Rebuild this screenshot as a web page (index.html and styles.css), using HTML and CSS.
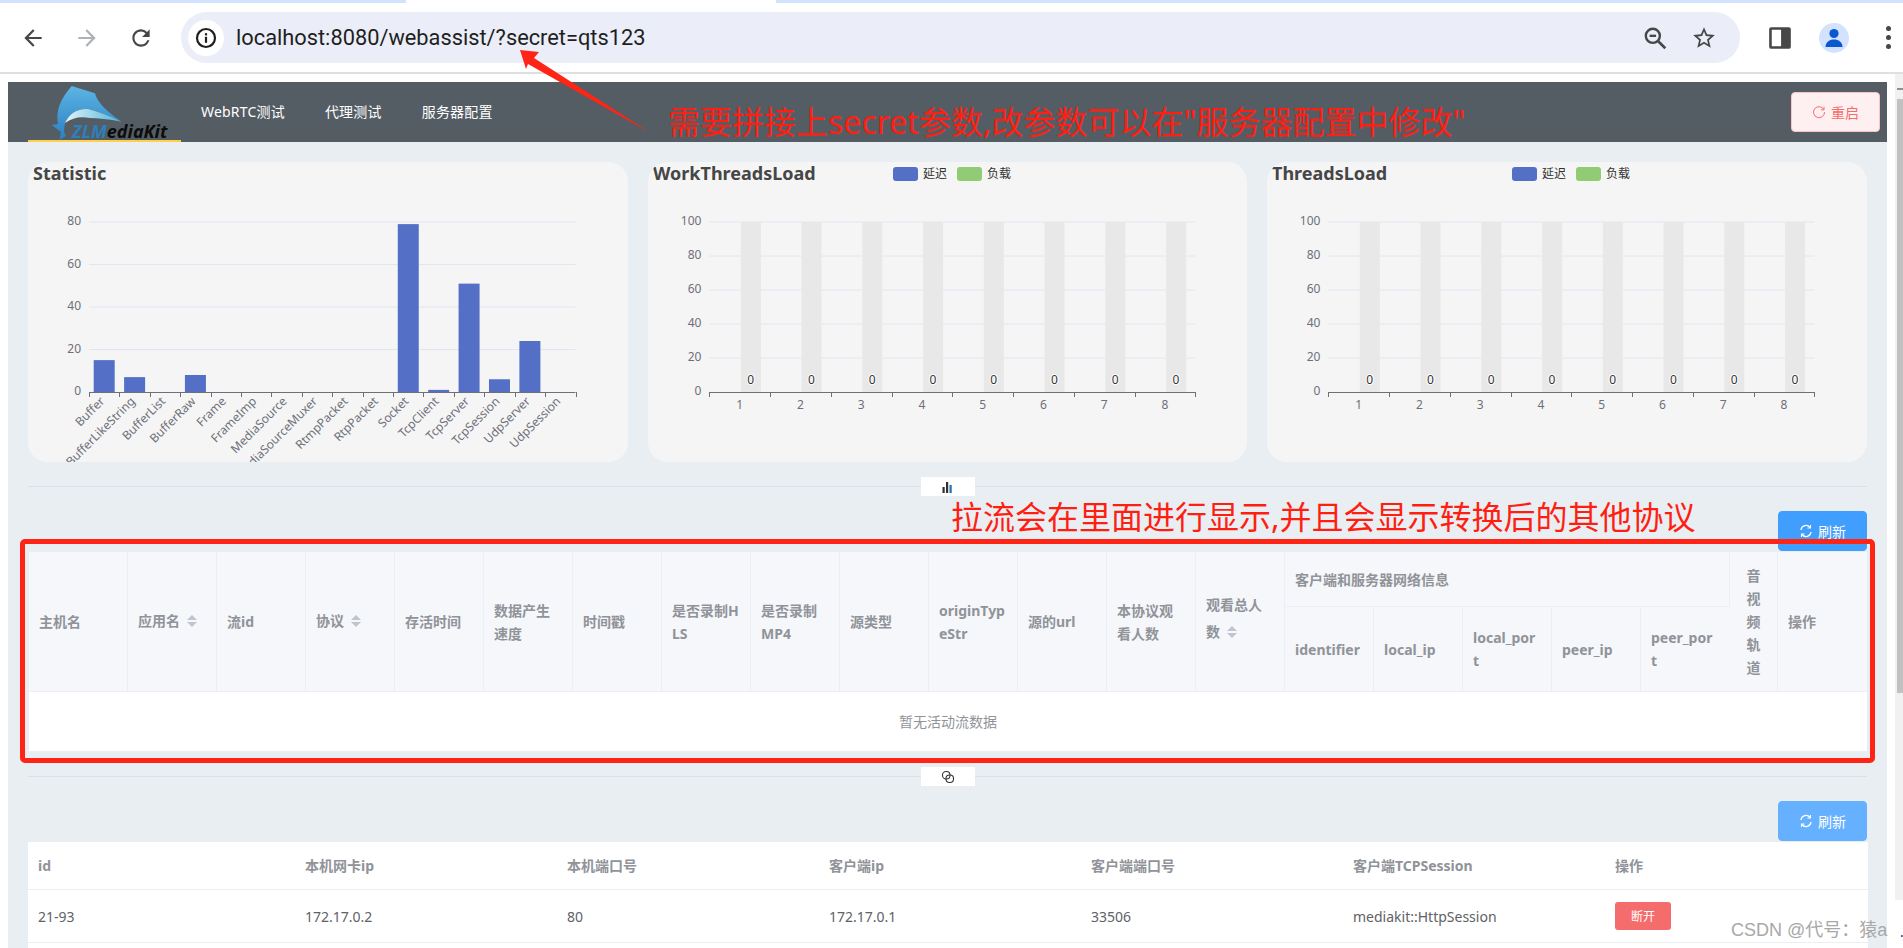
FILE: index.html
```html
<!DOCTYPE html>
<html lang="zh-CN">
<head>
    <meta charset="UTF-8">
    <meta name="viewport" content="width=device-width, initial-scale=1.0">
    <title>ZLMediaKit webassist</title>
    <link rel="stylesheet" href="styles.css">
</head>
<body>
    <div class="tabstrip"><div class="tab-active"></div></div>

    <div class="toolbar">
        <button class="tool-btn">
            <svg class="tool-icon" viewBox="0 0 24 24"><path d="M20 11H7.83l5.59-5.59L12 4l-8 8 8 8 1.41-1.41L7.83 13H20v-2z"/></svg>
        </button>
        <button class="tool-btn tool-off">
            <svg class="tool-icon" viewBox="0 0 24 24"><path d="M4 11h12.17l-5.59-5.59L12 4l8 8-8 8-1.41-1.41L16.17 13H4v-2z"/></svg>
        </button>
        <button class="tool-btn">
            <svg class="tool-icon" viewBox="0 0 24 24"><path d="M17.65 6.35A7.95 7.95 0 0 0 12 4c-4.42 0-7.99 3.58-7.99 8s3.57 8 7.99 8c3.73 0 6.84-2.55 7.73-6h-2.08A5.99 5.99 0 0 1 12 18c-3.31 0-6-2.69-6-6s2.69-6 6-6c1.66 0 3.14.69 4.22 1.78L13 11h7V4l-2.35 2.35z"/></svg>
        </button>
        <div class="omnibox">
            <div class="site-info">
                <svg viewBox="0 0 24 24" class="info-icon"><circle cx="12" cy="12" r="9" fill="none" stroke="#1f1f1f" stroke-width="2.2"/><rect x="10.9" y="10.8" width="2.2" height="6" fill="#1f1f1f"/><rect x="10.9" y="7.2" width="2.2" height="2.2" fill="#1f1f1f"/></svg>
            </div>
            <span class="url">localhost:8080/webassist/?secret=qts123</span>
            <svg class="omni-icon omni-zoom" viewBox="0 0 24 24"><circle cx="10" cy="10" r="6.5" fill="none" stroke="#474747" stroke-width="2.2"/><path d="M7 10h6" stroke="#474747" stroke-width="2.2"/><path d="M15 15l6.5 6.5" stroke="#474747" stroke-width="2.4"/></svg>
            <svg class="omni-icon omni-star" viewBox="0 0 24 24"><path d="M22 9.24l-7.19-.62L12 2 9.19 8.63 2 9.24l5.46 4.73L5.82 21 12 17.27 18.18 21l-1.63-7.03L22 9.24zM12 15.4l-3.76 2.27 1-4.28-3.32-2.88 4.38-.38L12 6.1l1.71 4.04 4.38.38-3.32 2.88 1 4.28L12 15.4z"/></svg>
        </div>
        <button class="tool-btn side-btn">
            <svg class="tool-icon" viewBox="0 0 24 24"><rect x="2" y="2" width="20" height="20" rx="2" fill="#474747"/><rect x="4.4" y="4.4" width="8.6" height="15.2" fill="#fff"/></svg>
        </button>
        <button class="tool-btn">
            <svg class="avatar" viewBox="0 0 30 30"><circle cx="15" cy="15" r="15" fill="#d3e3fd"/><circle cx="15" cy="10.5" r="4.6" fill="#0b57d0"/><path d="M6.5 24c0-5 4-7.5 8.5-7.500s8.500 2.500 8.500 7.500z" fill="#0b57d0"/></svg>
        </button>
        <button class="tool-btn kebab">
            <span class="dot"></span><span class="dot"></span><span class="dot"></span>
        </button>
    </div>

    <div class="viewport">
        <div class="page">
            <div class="topbar">
                <div class="logo">
                    <svg class="logo-fish" viewBox="0 0 153 60">
                        <defs>
                            <linearGradient id="fishBlue" x1="0" y1="0" x2="0" y2="1">
                                <stop offset="0" stop-color="#5db4e4"/>
                                <stop offset="1" stop-color="#2a80c2"/>
                            </linearGradient>
                            <linearGradient id="fishBelly" x1="0" y1="0" x2="1" y2="0">
                                <stop offset="0" stop-color="#e2f4f8"/>
                                <stop offset="1" stop-color="#4fb3d9"/>
                            </linearGradient>
                        </defs>
                        <path d="M43.700 4 L67 11.300 Q70 24 93.700 39.700 Q76 31 60 27 Q44 26 37 41 Q36 46 36 50 L38 54 L31.300 58 L33 50 L23.700 43 L30 42 Q26 24 43.700 4z" fill="url(#fishBlue)"/>
                        <path d="M37 41 Q44 26 60 27 Q76 31 93.700 39.700 Q74 36 62 36 Q48 33 37 41z" fill="url(#fishBelly)"/>
                    </svg>
                    <span class="logo-text"><span class="logo-zlm">ZLM</span>ediaKit</span>
                </div>
                <a class="menu-item">WebRTC测试</a>
                <a class="menu-item">代理测试</a>
                <a class="menu-item">服务器配置</a>
                <button class="btn btn-restart">
                    <svg class="btn-icon" viewBox="0 0 14 14"><path d="M11.800 4.500A5.500 5.500 0 1 0 12.500 7" fill="none" stroke="currentColor" stroke-width="1"/><path d="M12 1.800v3h-3" fill="none" stroke="currentColor" stroke-width="1"/></svg>
                    重启
                </button>
            </div>

            <div class="content">
                <div class="charts">
                    <div class="card" id="chartStatistic"></div>
                    <div class="card" id="chartWork"></div>
                    <div class="card" id="chartThreads"></div>
                </div>

                <div class="divider">
                    <span class="divider-label">
                        <svg viewBox="0 0 14 14" class="divider-icon"><rect x="1.500" y="7" width="2.200" height="6" fill="#303133"/><rect x="5" y="2" width="2.200" height="11" fill="#303133"/><rect x="8.500" y="5" width="2.200" height="8" fill="#1f6fb2"/></svg>
                    </span>
                </div>

                <div class="actions">
                    <button class="btn btn-refresh">
                        <svg class="btn-icon" viewBox="0 0 14 14"><path d="M2 6A5 5 0 0 1 11 3.500M12 8A5 5 0 0 1 3 10.500" fill="none" stroke="currentColor" stroke-width="1.300"/><path d="M11.500 1v3h-3M2.500 13v-3h3" fill="none" stroke="currentColor" stroke-width="1.100"/></svg>
                        刷新
                    </button>
                </div>

                <table class="data-table stream-table">
                    <colgroup>
                        <col class="col-first">
                        <col class="col-std"><col class="col-std"><col class="col-std"><col class="col-std">
                        <col class="col-std"><col class="col-std"><col class="col-std"><col class="col-std">
                        <col class="col-std"><col class="col-std"><col class="col-std"><col class="col-std"><col class="col-std">
                        <col class="col-std"><col class="col-std"><col class="col-std"><col class="col-std"><col class="col-std">
                        <col class="col-track">
                        <col class="col-last">
                    </colgroup>
                    <thead>
                        <tr class="head-top">
                            <th rowspan="2">主机名</th>
                            <th rowspan="2">应用名<span class="caret-wrapper"><i class="sort-caret ascending"></i><i class="sort-caret descending"></i></span></th>
                            <th rowspan="2">流id</th>
                            <th rowspan="2">协议<span class="caret-wrapper"><i class="sort-caret ascending"></i><i class="sort-caret descending"></i></span></th>
                            <th rowspan="2">存活时间</th>
                            <th rowspan="2">数据产生速度</th>
                            <th rowspan="2">时间戳</th>
                            <th rowspan="2">是否录制HLS</th>
                            <th rowspan="2">是否录制MP4</th>
                            <th rowspan="2">源类型</th>
                            <th rowspan="2">originTypeStr</th>
                            <th rowspan="2">源的url</th>
                            <th rowspan="2">本协议观看人数</th>
                            <th rowspan="2">观看总人数<span class="caret-wrapper"><i class="sort-caret ascending"></i><i class="sort-caret descending"></i></span></th>
                            <th colspan="5">客户端和服务器网络信息</th>
                            <th rowspan="2" class="th-track">音视频轨道</th>
                            <th rowspan="2">操作</th>
                        </tr>
                        <tr class="head-sub">
                            <th>identifier</th>
                            <th>local_ip</th>
                            <th>local_port</th>
                            <th>peer_ip</th>
                            <th>peer_por<br>t</th>
                        </tr>
                    </thead>
                    <tbody>
                        <tr><td colspan="21" class="empty">暂无活动流数据</td></tr>
                    </tbody>
                </table>

                <div class="divider">
                    <span class="divider-label">
                        <svg viewBox="0 0 14 14" class="divider-icon"><rect x="1.500" y="1.500" width="7.500" height="7.500" rx="3.500" fill="none" stroke="#303133" stroke-width="1.100"/><rect x="5" y="5" width="7.500" height="7.500" rx="3.500" fill="none" stroke="#303133" stroke-width="1.100"/></svg>
                    </span>
                </div>

                <div class="actions">
                    <button class="btn btn-refresh btn-light">
                        <svg class="btn-icon" viewBox="0 0 14 14"><path d="M2 6A5 5 0 0 1 11 3.500M12 8A5 5 0 0 1 3 10.500" fill="none" stroke="currentColor" stroke-width="1.300"/><path d="M11.500 1v3h-3M2.500 13v-3h3" fill="none" stroke="currentColor" stroke-width="1.100"/></svg>
                        刷新
                    </button>
                </div>

                <table class="data-table session-table">
                    <thead>
                        <tr>
                            <th class="sc-first">id</th>
                            <th>本机网卡ip</th>
                            <th>本机端口号</th>
                            <th>客户端ip</th>
                            <th>客户端端口号</th>
                            <th>客户端TCPSession</th>
                            <th>操作</th>
                        </tr>
                    </thead>
                    <tbody>
                        <tr>
                            <td>21-93</td>
                            <td>172.17.0.2</td>
                            <td>80</td>
                            <td>172.17.0.1</td>
                            <td>33506</td>
                            <td>mediakit::HttpSession</td>
                            <td><button class="btn-danger">断开</button></td>
                        </tr>
                        <tr class="row-next"><td colspan="7"></td></tr>
                    </tbody>
                </table>
            </div>
        </div>
        <div class="scrollbar">
            <span class="scroll-arrow"></span>
            <div class="scroll-thumb"></div>
        </div>
    </div>

    <!-- screenshot annotations, they sit over the page -->
    <svg class="note-arrow" viewBox="0 0 140 90"><polygon points="0,0 19,2 14,8 126,80 125,80 8,14 6,19" fill="#ff2516"/></svg>
    <div class="note note-url">需要拼接上secret参数,改参数可以在"服务器配置中修改"</div>
    <div class="note note-table">拉流会在里面进行显示,并且会显示转换后的其他协议</div>
    <div class="note-box"></div>
    <div class="watermark">CSDN @代号：猿a</div>
    <span class="stray-dot">.</span>

    <script src="chart.js"></script>
</body>
</html>
```

FILE: styles.css
```css
* {
    box-sizing: border-box;
}

html, body {
    margin: 0;
    height: 948px;
    overflow: hidden;
}

body {
    font-family: "Noto Sans", "Noto Sans CJK SC", sans-serif;
    font-size: 14px;
    background: #fff;
    display: flex;
    flex-direction: column;
}

button {
    font-family: inherit;
}

/* browser chrome */
.tabstrip {
    height: 3px;
    background: #d3e3fd;
    flex: none;
    padding-left: 406px;
}

.tab-active {
    width: 370px;
    height: 3px;
    background: #fff;
}

.toolbar {
    height: 71px;
    flex: none;
    display: flex;
    align-items: center;
    padding-left: 6px;
    border-bottom: 2px solid #e0e0e0;
    overflow: hidden;
}

.tool-btn {
    width: 54px;
    height: 40px;
    flex: none;
    background: none;
    border: none;
    padding: 0;
    display: flex;
    align-items: center;
    justify-content: center;
}

.tool-icon {
    width: 26px;
    height: 26px;
    fill: #474747;
}

.tool-off .tool-icon {
    fill: #aeb1b5;
}

.omnibox {
    width: 1559px;
    height: 51px;
    margin-left: 13px;
    flex: none;
    border-radius: 26px;
    background: #ebeef8;
    display: flex;
    align-items: center;
    padding-left: 7px;
}

.site-info {
    width: 36px;
    height: 36px;
    border-radius: 50%;
    background: #fff;
    display: flex;
    align-items: center;
    justify-content: center;
}

.info-icon {
    width: 24px;
    height: 24px;
}

.url {
    margin-left: 12px;
    font-family: Roboto, sans-serif;
    font-size: 21.8px;
    color: #1f1f1f;
}

.omni-icon {
    width: 26px;
    height: 26px;
    fill: #474747;
}

.omni-zoom {
    margin-left: auto;
}

.omni-star {
    margin-left: 23px;
    margin-right: 23px;
}

.side-btn {
    margin-left: 13px;
}

.avatar {
    width: 30px;
    height: 30px;
}

.kebab {
    flex-direction: column;
    gap: 4px;
    margin-right: -20px;
}

.dot {
    width: 5px;
    height: 5px;
    border-radius: 50%;
    background: #474747;
}

/* page */
.viewport {
    flex: 1;
    display: flex;
    min-height: 0;
    padding-left: 8px;
}

.page {
    width: 1879px;
    margin-top: 8px;
    background: #e9eef3;
    flex: none;
    overflow: hidden;
}

.topbar {
    height: 60px;
    background: #545c64;
    display: flex;
    align-items: center;
    padding-left: 20px;
    padding-right: 7px;
}

.logo {
    width: 153px;
    height: 60px;
    border-bottom: 2px solid #ffd04b;
    position: relative;
}

.logo-fish {
    width: 153px;
    height: 60px;
    display: block;
}

.logo-text {
    position: absolute;
    left: 44px;
    top: 37px;
    font-size: 18px;
    line-height: 24px;
    font-weight: bold;
    font-style: italic;
    color: #0c0c0c;
    white-space: nowrap;
}

.logo-zlm {
    color: #2f7fbb;
}

.menu-item {
    padding: 0 20px;
    line-height: 60px;
    color: #fff;
    font-size: 14px;
    letter-spacing: 0.2px;
}

.btn {
    width: 89px;
    height: 40px;
    border-radius: 4px;
    font-size: 14px;
    display: inline-flex;
    align-items: center;
    justify-content: center;
    gap: 5px;
    padding: 0;
    border: 1px solid transparent;
}

.btn-icon {
    width: 14px;
    height: 14px;
}

.btn-restart {
    margin-left: auto;
    background: #fef0f0;
    border-color: #fbc4c4;
    color: #f56c6c;
}

.btn-refresh {
    background: #409eff;
    border-color: #409eff;
    color: #fff;
}

.btn-light {
    background: #66b1ff;
    border-color: #66b1ff;
}

.content {
    padding: 20px 20px 0;
}

.charts {
    display: flex;
    gap: 20px;
}

.card {
    flex: 1;
    min-width: 0;
    height: 300px;
    background: #f5f5f5;
    border-radius: 20px;
    overflow: hidden;
}

.card svg {
    display: block;
}

.card .chart-title {
    font-size: 18px;
    font-weight: bold;
    fill: #464646;
}

.card .axis-label {
    font-size: 12px;
    fill: #6e7079;
}

.card .legend-label {
    font-size: 12px;
    fill: #333;
}

.card .bar-label {
    font-size: 12px;
    fill: #333;
    stroke: #fff;
    stroke-width: 2px;
    paint-order: stroke;
}

.divider {
    height: 1px;
    margin: 24px 0;
    background: #dcdfe6;
    position: relative;
}

.divider-label {
    position: absolute;
    left: 893px;
    top: -9px;
    width: 54px;
    height: 19px;
    background: #fff;
    display: flex;
    align-items: center;
    justify-content: center;
}

.divider-icon {
    width: 14px;
    height: 14px;
}

.actions {
    display: flex;
    justify-content: flex-end;
    margin-bottom: 1px;
}

/* tables */
.data-table {
    width: 1839px;
    border-collapse: separate;
    border-spacing: 0;
    table-layout: fixed;
    background: #fff;
    line-height: 23px;
}

.data-table th,
.data-table td {
    padding: 12px 10px;
    text-align: left;
    word-break: break-all;
    border-bottom: 1px solid #ebeef5;
}

.data-table th {
    color: #909399;
    font-weight: bold;
}

.data-table td {
    color: #606266;
}

.stream-table {
    border-left: 1px solid #ebeef5;
}

.stream-table th {
    background: #f5f7fa;
    border-right: 1px solid #ebeef5;
}

.stream-table th:last-child {
    border-right: none;
}

.stream-table .th-track {
    text-align: center;
}

.col-first {
    width: 99px;
}

.col-std {
    width: 89px;
}

.col-track {
    width: 48px;
}

.col-last {
    width: 89px;
}

.head-top {
    height: 55px;
}

.head-sub {
    height: 84px;
}

.data-table .empty {
    height: 60px;
    text-align: center;
    color: #909399;
}

.session-table th,
.session-table td {
    width: 262px;
}

.session-table th:first-child {
    width: 267px;
}

.session-table th:last-child {
    width: 263px;
}

.row-next td {
    height: 54px;
}

.caret-wrapper {
    display: inline-flex;
    flex-direction: column;
    align-items: center;
    height: 34px;
    width: 24px;
    vertical-align: middle;
    overflow: visible;
    position: relative;
}

.sort-caret {
    width: 0;
    height: 0;
    border: 5px solid transparent;
    position: absolute;
    left: 7px;
}

.sort-caret.ascending {
    border-bottom-color: #c0c4cc;
    top: 5px;
}

.sort-caret.descending {
    border-top-color: #c0c4cc;
    bottom: 7px;
}

.btn-danger {
    width: 56px;
    height: 28px;
    border: none;
    border-radius: 3px;
    background: #f56c6c;
    color: #fff;
    font-size: 12px;
    padding: 0;
    display: block;
}

/* scrollbar */
.scrollbar {
    width: 8px;
    height: 826px;
    margin-left: 8px;
    background: #f1f1f1;
    flex: none;
    position: relative;
}

.scroll-arrow {
    position: absolute;
    left: 2px;
    top: 14px;
    width: 6px;
    height: 2px;
    background: #8f8f8f;
}

.scroll-thumb {
    position: absolute;
    left: 2px;
    top: 25px;
    width: 6px;
    height: 594px;
    background: #c1c1c1;
}

/* annotations */
.note {
    position: absolute;
    font-size: 32px;
    line-height: 40px;
    color: #ff1f12;
    white-space: nowrap;
}

.note-url {
    left: 668px;
    top: 102px;
}

.note-table {
    left: 951px;
    top: 497px;
}

.note-box {
    position: absolute;
    left: 20px;
    top: 539px;
    width: 1855px;
    height: 224px;
    border: 5px solid #ff2516;
    border-radius: 5px;
}

.note-arrow {
    position: absolute;
    left: 520px;
    top: 50px;
    width: 140px;
    height: 90px;
}

.watermark {
    position: absolute;
    left: 1731px;
    top: 918px;
    font-family: "Liberation Sans", "Noto Sans CJK SC", sans-serif;
    font-size: 18px;
    line-height: 24px;
    color: #a8a8a8;
    white-space: nowrap;
}

.stray-dot {
    position: absolute;
    left: 1900px;
    top: 922px;
    font-size: 14px;
    color: #333;
}
```

FILE: chart.js
```js
var NS = "http://www.w3.org/2000/svg";

function el(parent, name, attrs, text) {
    var node = document.createElementNS(NS, name);
    for (var key in attrs) {
        node.setAttribute(key, attrs[key]);
    }
    if (text !== undefined) {
        node.textContent = text;
    }
    parent.appendChild(node);
    return node;
}

function makeChart(id, title, opts) {
    var svg = el(document.getElementById(id), "svg", { width: 600, height: 300, viewBox: "0 0 600 300" });
    var left = opts.left, right = opts.right, top = 60, bottom = 230;
    var count = opts.labels.length;
    var step = (right - left) / count;

    el(svg, "text", { x: 5, y: 18, "class": "chart-title" }, title);

    if (opts.legend) {
        el(svg, "rect", { x: 245, y: 5, width: 25, height: 14, rx: 3, fill: "#5470c6" });
        el(svg, "text", { x: 275, y: 16, "class": "legend-label" }, "延迟");
        el(svg, "rect", { x: 309, y: 5, width: 25, height: 14, rx: 3, fill: "#91cc75" });
        el(svg, "text", { x: 339, y: 16, "class": "legend-label" }, "负载");
    }

    // grid lines and y labels
    opts.ticks.forEach(function (value) {
        var y = bottom - (bottom - top) * value / opts.max;
        if (value > 0) {
            el(svg, "line", { x1: left, x2: right, y1: y, y2: y, stroke: "#e0e6f1" });
        }
        el(svg, "text", { x: left - 8, y: y + 3, "text-anchor": "end", "class": "axis-label" }, value);
    });

    // bars
    opts.labels.forEach(function (label, i) {
        if (opts.values) {
            var h = (bottom - top) * opts.values[i] / opts.max;
            el(svg, "rect", { x: left + step * i + (step - 21) / 2, y: bottom - h, width: 21, height: h, fill: "#5470c6" });
        } else {
            el(svg, "rect", { x: left + step * i + 31.4, y: top, width: 20, height: bottom - top, fill: "#e8e8e8" });
            el(svg, "text", { x: left + step * i + 41.4, y: 222, "text-anchor": "middle", "class": "bar-label" }, "0");
        }
    });

    // axis and ticks
    el(svg, "line", { x1: left, x2: right, y1: bottom + 0.5, y2: bottom + 0.5, stroke: "#6e7079" });
    for (var i = 0; i <= count; i++) {
        var tx = Math.round(left + step * i) + 0.5;
        el(svg, "line", { x1: tx, x2: tx, y1: bottom, y2: bottom + 5, stroke: "#6e7079" });
    }

    // x labels
    opts.labels.forEach(function (label, i) {
        var cx = left + step * i + step / 2;
        if (opts.rotate) {
            var ax = cx + 1, ay = bottom + 10;
            el(svg, "text", {
                x: ax, y: ay, "text-anchor": "end",
                transform: "rotate(-45 " + ax + " " + ay + ")",
                "class": "axis-label"
            }, label);
        } else {
            el(svg, "text", { x: cx, y: bottom + 17, "text-anchor": "middle", "class": "axis-label" }, label);
        }
    });
}

makeChart("chartStatistic", "Statistic", {
    left: 61, right: 547.5, max: 80, ticks: [0, 20, 40, 60, 80], rotate: true,
    labels: ["Buffer", "BufferLikeString", "BufferList", "BufferRaw", "Frame", "FrameImp", "MediaSource", "MediaSourceMuxer",
        "RtmpPacket", "RtpPacket", "Socket", "TcpClient", "TcpServer", "TcpSession", "UdpServer", "UdpSession"],
    values: [15, 7, 0, 8, 0, 0, 0, 0, 0, 0, 79, 1, 51, 6, 24, 0]
});

var threads = {
    left: 61.4, right: 547.4, max: 100, ticks: [0, 20, 40, 60, 80, 100], legend: true,
    labels: ["1", "2", "3", "4", "5", "6", "7", "8"]
};
makeChart("chartWork", "WorkThreadsLoad", threads);
makeChart("chartThreads", "ThreadsLoad", threads);
```
